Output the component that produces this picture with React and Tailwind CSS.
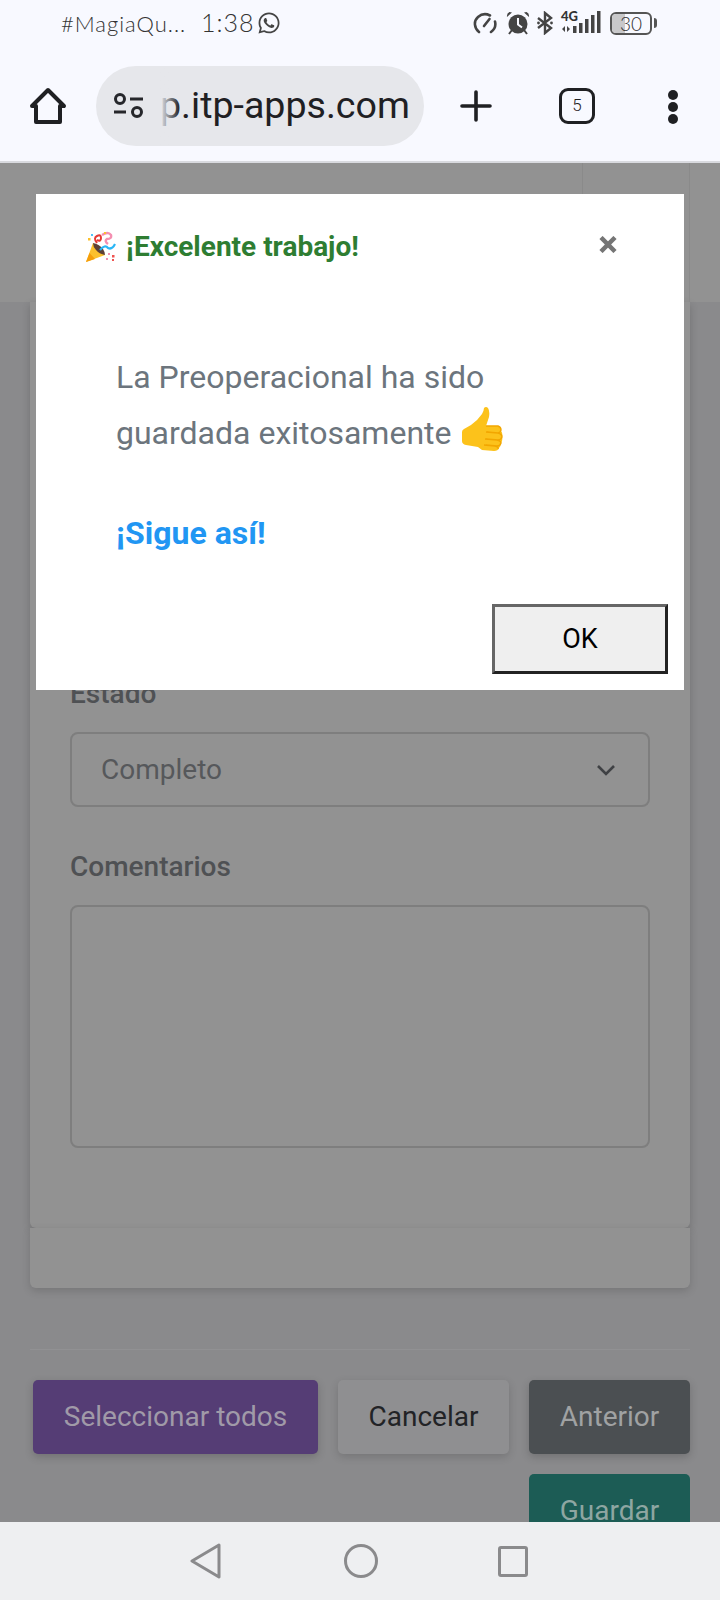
import { FaWhatsapp } from "react-icons/fa";

function SpeedIcon() {
  return (
    <svg width="24" height="22" viewBox="0 0 24 22" fill="none" stroke="#444" strokeWidth="2.6" strokeLinecap="round">
      <path d="M6 20 C1 16 0.5 9 5 5 C8.5 2 13 1.5 17 3.5" />
      <path d="M18 20 C21.5 17.5 23 13.5 22 9.5" />
      <path d="M11 14 L16.5 7" />
    </svg>
  );
}

function AlarmIcon() {
  return (
    <svg width="24" height="24" viewBox="0 0 24 24" fill="#444">
      <circle cx="12" cy="13" r="9.5" />
      <path d="M1 6 L6 1.5 L3.5 1 Q0.5 2 1 6 Z M23 6 L18 1.5 L20.5 1 Q23.5 2 23 6 Z" />
      <path d="M3 23 L6 19 M21 23 L18 19" stroke="#444" strokeWidth="2" />
      <path d="M12 7 V13.5 L16 16.5" fill="none" stroke="#f8f9ff" strokeWidth="2" />
    </svg>
  );
}

function BluetoothIcon() {
  return (
    <svg width="18" height="24" viewBox="0 0 18 24" fill="none" stroke="#444" strokeWidth="2.4">
      <path d="M2 7 L15 17 L9 22 V2 L15 7 L2 17" />
      <circle cx="2.5" cy="12" r="1.4" fill="#444" stroke="none" />
      <circle cx="15.5" cy="12" r="1.4" fill="#444" stroke="none" />
    </svg>
  );
}

function SignalIcon() {
  return (
    <svg width="40" height="24" viewBox="0 0 40 24" fill="#444">
      <path d="M1 18 L4 15 V21 Z M6 15 L9 18 L6 21 Z" />
      <rect x="12" y="15" width="3.5" height="7" />
      <rect x="18" y="12" width="3.5" height="10" />
      <rect x="24" y="8" width="3.5" height="14" />
      <rect x="30" y="4" width="3.5" height="18" />
      <rect x="36" y="0" width="3.5" height="22" />
    </svg>
  );
}

function Battery() {
  return (
    <div className="flex items-center gap-[2px]">
      <div className="relative flex h-[23px] w-[42px] items-center justify-center overflow-hidden rounded-[6px] border-2 border-[#555]">
        <div className="absolute inset-y-0 left-0 w-[13px] bg-[#c8c8ca]" />
        <span className="relative font-['Lato',sans-serif] text-[19px] leading-none font-light text-[#333]">30</span>
      </div>
      <div className="h-[10px] w-[3px] rounded-r-sm bg-[#555]" />
    </div>
  );
}

function StatusBar() {
  return (
    <div className="flex h-[46px] items-center justify-between pr-[63px] pl-[61px] font-['Lato',sans-serif] font-light text-[#333]">
      <div className="flex items-center">
        <span className="w-[140px] text-[22px] tracking-[1px]">#MagiaQu...</span>
        <span className="w-[56px] text-[25px] tracking-[1px]">1:38</span>
        <FaWhatsapp size={24} color="#444" />
      </div>
      <div className="flex items-center">
        <SpeedIcon />
        <div className="ml-[9px]"><AlarmIcon /></div>
        <div className="ml-[6px]"><BluetoothIcon /></div>
        <div className="relative ml-[7px] h-[24px] w-[40px]">
          <span className="absolute -top-[1px] left-0 text-[13px] leading-none font-black">4G</span>
          <SignalIcon />
        </div>
        <div className="ml-[9px]"><Battery /></div>
      </div>
    </div>
  );
}

function BrowserBar() {
  return (
    <div className="flex h-[117px] items-start border-b-2 border-[#d9dadf] pt-[20px]">
      <svg className="mt-[21px] ml-[29px]" width="38" height="38" viewBox="0 0 38 38" fill="none" stroke="#1f2023" strokeWidth="4" strokeLinejoin="round">
        <path d="M19 3 L35 19 H31 V35 H7 V19 H3 Z" />
      </svg>
      <div className="relative ml-[29px] flex h-[80px] w-[328px] items-center overflow-hidden rounded-full bg-[#e6e7eb]">
        <svg className="ml-[17px] shrink-0" width="31" height="26" viewBox="0 0 31 26" fill="none" stroke="#26272b" strokeWidth="3">
          <circle cx="7" cy="6" r="4.5" />
          <path d="M17 6 H30 M1 19 H13" />
          <circle cx="24" cy="19" r="4.5" />
        </svg>
        <span className="ml-[16px] font-['Roboto',sans-serif] text-[37.6px] leading-none whitespace-nowrap text-[#1f2023]">p.itp-apps.com</span>
        <div className="absolute top-0 bottom-0 left-[64px] w-[20px] bg-gradient-to-r from-[#e6e7eb] to-transparent" />
      </div>
      <svg className="mt-[24px] ml-[36px]" width="32" height="32" viewBox="0 0 32 32" stroke="#1f2023" strokeWidth="3.6" strokeLinecap="round">
        <path d="M16 2 V30 M2 16 H30" />
      </svg>
      <div className="mt-[22px] ml-[67px] flex h-[36px] w-[36px] items-center justify-center rounded-[9px] border-[3.5px] border-[#1f2023] font-['Roboto',sans-serif] text-[17px] font-light text-[#1f2023]">5</div>
      <div className="mt-[24px] ml-[73px] flex flex-col gap-[2px]">
        <div className="h-[10px] w-[10px] rounded-full bg-[#1f2023]" />
        <div className="h-[10px] w-[10px] rounded-full bg-[#1f2023]" />
        <div className="h-[10px] w-[10px] rounded-full bg-[#1f2023]" />
      </div>
    </div>
  );
}

function PartyPopper() {
  return (
    <svg width="32" height="32" viewBox="0 0 32 32">
      <path d="M1 31 L8 12 L20 24 Z" fill="#fbc02d" />
      <path d="M1 31 L4.5 22 L10 28 Z" fill="#f59e0b" />
      <path d="M8 12 Q14 13 18 18 Q20 21 20 24 Q14 23 11 19 Q8 16 8 12 Z" fill="#5d4037" />
      <path d="M12 12 Q8 7 12 5 Q16 3 16 7 Q16 11 12 9" fill="none" stroke="#e53935" strokeWidth="2" />
      <path d="M17 4 Q23 0 26 4 Q27 8 22 8 Q19 10 23 13" fill="none" stroke="#f48fb1" strokeWidth="2.4" />
      <path d="M15 19 Q20 13 23 17 Q27 19 30 13" fill="none" stroke="#29b6f6" strokeWidth="2.2" />
      <rect x="3" y="7" width="2.5" height="2.5" fill="#fbc02d" />
      <rect x="6" y="3" width="2" height="2" fill="#4fc3f7" />
      <rect x="19" y="1" width="2" height="2" fill="#fbc02d" />
      <rect x="27" y="24" width="2.5" height="2.5" fill="#ef5350" />
      <rect x="23" y="22" width="2" height="2" fill="#f48fb1" />
      <rect x="21" y="27" width="2" height="2" fill="#f48fb1" />
      <rect x="27" y="28" width="2" height="2" fill="#ef5350" />
    </svg>
  );
}

function ThumbsUp() {
  return (
    <svg className="-mt-[8px] ml-[10px] shrink-0" width="42" height="44" viewBox="0 0 42 44">
      <path d="M0 25 Q0 23 2 22 L9 18 Q16 13 20 7 Q22 3 22 1 Q24 -1 26 1 Q28 4 27 10 L24 19 L36 19 Q40 21 39 24 Q41 26 40 30 Q41 33 39 36 Q39 39 37 41 Q36 44 32 44 L20 43 L16 40 L4 38 Q0 37 0 34 Z" fill="#fcc21b" />
      <path d="M24 19 L36 19 Q39 20 39 23 Q38 26 36 26 L25 25 M24 25 L36 26 Q40 27 40 30 Q39 33 36 33 L24 32 M23 32 L35 33 Q39 34 39 36 Q38 39 35 39 L24 38 M22 38 L33 39 Q37 40 36 42" fill="none" stroke="#f2a600" strokeWidth="1.4" />
    </svg>
  );
}

function SweetModal() {
  return (
    <div className="absolute top-[31px] left-[36px] flex h-[496px] w-[648px] flex-col bg-white font-['Roboto',sans-serif]">
      <div className="flex items-start justify-between pt-[36px] pr-[67px] pl-[49px]">
        <div className="flex items-center gap-[9px]">
          <PartyPopper />
          <h2 className="pt-[1px] text-[28px] leading-[32px] font-bold text-[#2e7d32]">¡Excelente trabajo!</h2>
        </div>
        <svg className="mt-[6px]" width="18" height="17" viewBox="0 0 18 17" stroke="#757575" strokeWidth="4.5">
          <path d="M2 1.5 L16 15.5 M16 1.5 L2 15.5" />
        </svg>
      </div>
      <div className="pt-[86px] pl-[80px]">
        <p className="text-[32px] leading-[56px] text-[#6c757d]">La Preoperacional ha sido</p>
        <p className="flex h-[56px] items-center text-[32px] leading-[56px] text-[#6c757d]">
          guardada exitosamente
          <ThumbsUp />
        </p>
        <p className="mt-[44px] text-[32px] leading-[56px] font-bold text-[#2196f3]">¡Sigue así!</p>
      </div>
      <div className="mt-auto flex justify-end pr-[16px] pb-[16px]">
        <button className="h-[70px] w-[176px] border-[3px] border-t-[#666] border-r-[#222] border-b-[#222] border-l-[#666] bg-[#efefef] text-[27px] text-black">OK</button>
      </div>
    </div>
  );
}

function PageBehind() {
  return (
    <div className="h-full bg-[#8a8a8c] font-['Roboto',sans-serif]">
      <div className="flex h-[139px] justify-end bg-[#929292]">
        <div className="mr-[30px] h-full w-[108px] border-x border-[#8a8a8a]" />
      </div>
      <div className="mx-[30px]">
        <div className="h-[926px] rounded-b-[6px] bg-[#929292] px-[40px] pt-[376px] shadow-[0_3px_8px_rgba(0,0,0,0.18)]">
          <label className="block text-[28px] leading-[32px] font-medium text-[#4f5154]">Estado</label>
          <div className="mt-[22px] flex h-[75px] items-center justify-between rounded-[8px] border-2 border-[#7e7e7e] pr-[32px] pl-[29px] text-[28px] text-[#56585b]">
            Completo
            <svg width="20" height="12" viewBox="0 0 20 12" fill="none" stroke="#3f4144" strokeWidth="2.6">
              <path d="M2 2 L10 10 L18 2" />
            </svg>
          </div>
          <label className="mt-[44px] block text-[28px] leading-[32px] font-medium text-[#4f5154]">Comentarios</label>
          <div className="mt-[22px] h-[243px] rounded-[8px] border-2 border-[#7e7e7e]" />
        </div>
        <div className="h-[60px] rounded-b-[6px] bg-[#929292] shadow-[0_3px_8px_rgba(0,0,0,0.15)]" />
        <div className="mt-[61px] border-t border-[#919193]" />
        <div className="mt-[30px] flex flex-wrap justify-end gap-x-[20px] gap-y-[20px] text-[28px]">
          <button className="h-[74px] w-[285px] rounded-[5px] bg-[#553d75] text-[#a09aa8] shadow-[0_3px_8px_rgba(0,0,0,0.18)]">Seleccionar todos</button>
          <button className="h-[74px] w-[171px] rounded-[5px] bg-[#8f8f91] text-[#222326] shadow-[0_3px_8px_rgba(0,0,0,0.15)]">Cancelar</button>
          <button className="h-[74px] w-[161px] rounded-[5px] bg-[#4b4f52] text-[#a0a2a3] shadow-[0_3px_8px_rgba(0,0,0,0.18)]">Anterior</button>
          <button className="h-[74px] w-[161px] rounded-[5px] bg-[#1c5c55] text-[#8ea6a2]">Guardar</button>
        </div>
      </div>
    </div>
  );
}

function NavBar() {
  return (
    <div className="flex h-[78px] shrink-0 items-center justify-center bg-[#eeeff1]">
      <svg className="-ml-[3px]" width="32" height="36" viewBox="0 0 32 36" fill="none" stroke="#8a8a8c" strokeWidth="3" strokeLinejoin="round">
        <path d="M29 2 L2 18 L29 34 Z" />
      </svg>
      <svg className="ml-[121px]" width="36" height="36" viewBox="0 0 36 36" fill="none" stroke="#8a8a8c" strokeWidth="3">
        <circle cx="18" cy="18" r="15.5" />
      </svg>
      <div className="ml-[119px] h-[31px] w-[30px] rounded-[3px] border-[3px] border-[#8a8a8c]" />
    </div>
  );
}

export default function App() {
  return (
    <div className="flex h-[1600px] w-[720px] flex-col overflow-hidden bg-[#f8f9ff]">
      <StatusBar />
      <BrowserBar />
      <div className="relative min-h-0 flex-1 overflow-hidden">
        <PageBehind />
        <SweetModal />
      </div>
      <NavBar />
    </div>
  );
}
